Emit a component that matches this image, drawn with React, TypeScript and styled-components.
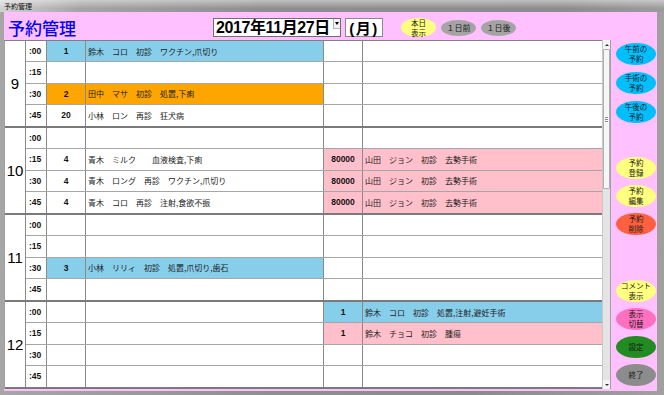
import React from 'react';
import styled, { createGlobalStyle } from 'styled-components';

const GlobalStyle = createGlobalStyle`
  html, body { margin: 0; padding: 0; background: #ffffff; }
  body { font-family: "Noto Sans CJK JP", "Liberation Sans", sans-serif; }
  * { box-sizing: border-box; }
`;

const CJK = `"Noto Sans CJK JP", "Liberation Sans", sans-serif`;
const NUM = `"Liberation Sans", "Noto Sans CJK JP", sans-serif`;

const Window = styled.div`
  width: 664px;
  height: 395px;
  display: flex;
  flex-direction: column;
  overflow: hidden;
  background: linear-gradient(90deg, #a6a6a6, #8f8f8f 40%, #8a8a8a 70%, #a0a0a0);
`;

const TitleBar = styled.div`
  flex: none;
  height: 12px;
  padding-left: 4px;
  font-family: ${CJK};
  font-size: 7px;
  line-height: 12px;
  color: #111;
  background:
    linear-gradient(180deg, rgba(255, 255, 255, 0.45), rgba(255, 255, 255, 0) 70%),
    linear-gradient(90deg, #d2d2d2 0%, #a4a4a4 12%, #8e8e8e 40%, #8c8c8c 85%, #9c9c9c 100%);
`;

const Client = styled.div`
  flex: 1;
  margin: 0 7px 4px 4px;
  background: #ffc0ff;
  display: flex;
  flex-direction: column;
`;

const Header = styled.div`
  flex: none;
  height: 28px;
  padding-top: 3px;
  display: flex;
  align-items: center;
`;

const AppTitle = styled.div`
  width: 209px;
  padding-left: 4px;
  font-family: ${CJK};
  font-size: 17px;
  font-weight: 500;
  line-height: 1;
  color: #0000ff;
`;

const DateBox = styled.div`
  width: 128px;
  height: 19px;
  display: flex;
  align-items: flex-start;
  background: #ffffff;
  border: 1px solid #6e6e6e;
  padding-left: 2px;
`;

const DateText = styled.span`
  font-family: ${NUM};
  font-weight: bold;
  font-size: 16px;
  line-height: 17px;
  letter-spacing: -0.4px;
  color: #000;
`;

const DropArrow = styled.span`
  margin-left: auto;
  width: 7px;
  height: 10px;
  background: #f2f2f2;
  border-left: 1px solid #b8b8b8;
  border-bottom: 1px solid #b8b8b8;
  display: flex;
  align-items: center;
  justify-content: center;
  &::after {
    content: '';
    border-left: 2px solid transparent;
    border-right: 2px solid transparent;
    border-top: 3px solid #000;
  }
`;

const DayBox = styled.div`
  margin-left: 4px;
  width: 38px;
  height: 19px;
  background: #ffffff;
  border: 1px solid #8a8a8a;
  display: flex;
  align-items: center;
  justify-content: center;
  font-family: ${NUM};
  font-weight: bold;
  font-size: 15px;
  letter-spacing: 1.5px;
  color: #000;
`;

const Oval = styled.div<{ $bg: string; $w: number; $h: number; $ml?: number; $fs?: number; $lh?: number }>`
  flex: none;
  width: ${(p) => p.$w}px;
  height: ${(p) => p.$h}px;
  margin-left: ${(p) => p.$ml ?? 0}px;
  border-radius: 50%;
  background: ${(p) => p.$bg};
  color: #1a1a1a;
  display: flex;
  flex-direction: column;
  align-items: center;
  justify-content: center;
  font-family: ${CJK};
  font-size: ${(p) => p.$fs ?? 7.5}px;
  line-height: ${(p) => p.$lh ?? 10}px;
  text-align: center;
`;

const OvalLine = styled.span`
  display: block;
  white-space: nowrap;
`;

const Body = styled.div`
  flex: none;
  height: 349px;
  display: flex;
`;

const Grid = styled.div`
  width: 598px;
  border-left: 1px solid #a0a0a0;
  border-top: 1px solid #808080;
  display: flex;
  flex-direction: column;
  background: #ffffff;
`;

const HourBlock = styled.div`
  height: 87px;
  display: flex;
  border-bottom: 2px solid #7a7a7a;
`;

const HourCell = styled.div`
  width: 21px;
  border-right: 1px solid #8a8a8a;
  display: flex;
  align-items: center;
  justify-content: center;
  font-family: ${NUM};
  font-size: 15px;
  color: #000;
`;

const Slots = styled.div`
  flex: 1;
  display: grid;
  grid-template-rows: repeat(4, 1fr);
`;

const Slot = styled.div`
  display: grid;
  grid-template-columns: 21px 39px 238px 39px 1fr;
  border-bottom: 1px solid #a6a6a6;
  &:last-child {
    border-bottom: none;
  }
`;

const MinuteCell = styled.div`
  border-right: 1px solid #8a8a8a;
  display: flex;
  align-items: center;
  padding-left: 3px;
  font-family: ${NUM};
  font-weight: bold;
  font-size: 8.5px;
  color: #111;
`;

const NumCell = styled.div<{ $bg?: string }>`
  background: ${(p) => p.$bg ?? '#ffffff'};
  border-right: 1px solid #8a8a8a;
  display: flex;
  align-items: center;
  justify-content: center;
  font-family: ${NUM};
  font-weight: bold;
  font-size: 8.5px;
  color: #111;
`;

const TextCell = styled.div<{ $bg?: string; $last?: boolean }>`
  background: ${(p) => p.$bg ?? '#ffffff'};
  border-right: ${(p) => (p.$last ? 'none' : '1px solid #8a8a8a')};
  display: flex;
  align-items: center;
  padding-left: 2px;
  font-family: ${CJK};
  font-size: 8px;
  color: #222;
  white-space: pre;
`;

const ScrollBar = styled.div`
  width: 9px;
  display: flex;
  flex-direction: column;
  background: #e4e4e4;
  border-left: 1px solid #c8c8c8;
  border-right: 1px solid #a0a0a0;
`;

const ScrollButton = styled.div<{ $down?: boolean }>`
  flex: none;
  height: 9px;
  background: #f4f4f4;
  display: flex;
  align-items: center;
  justify-content: center;
  &::after {
    content: '';
    border-left: 2px solid transparent;
    border-right: 2px solid transparent;
    ${(p) => (p.$down ? 'border-top: 2px solid #333;' : 'border-bottom: 2px solid #333;')}
  }
`;

const Thumb = styled.div`
  flex: none;
  height: 140px;
  background: #f6f6f6;
  border: 1px solid #b0b0b0;
  border-radius: 1px;
  display: flex;
  flex-direction: column;
  align-items: center;
  justify-content: center;
  gap: 1px;
`;

const Grip = styled.span`
  width: 3px;
  height: 1px;
  background: #8a8a8a;
`;

const Track = styled.div`
  flex: 1;
`;

const SidePanel = styled.div`
  width: 46px;
  padding-left: 5px;
  display: flex;
  flex-direction: column;
`;

const ButtonGroup = styled.div<{ $mt: number; $gap: number }>`
  margin-top: ${(p) => p.$mt}px;
  display: flex;
  flex-direction: column;
  gap: ${(p) => p.$gap}px;
`;

type Side = { num?: string; text?: string; bg?: string };
type Row = { min: string; left?: Side; right?: Side };

const BLUE = '#87ceeb';
const ORANGE = '#ffa500';
const PINK = '#ffc0cb';

const hours: { h: string; rows: Row[] }[] = [
  {
    h: '9',
    rows: [
      { min: ':00', left: { num: '1', text: '鈴木　コロ　初診　ワクチン,爪切り', bg: BLUE } },
      { min: ':15' },
      { min: ':30', left: { num: '2', text: '田中　マサ　初診　処置,下痢', bg: ORANGE } },
      { min: ':45', left: { num: '20', text: '小林　ロン　再診　狂犬病' } },
    ],
  },
  {
    h: '10',
    rows: [
      { min: ':00' },
      {
        min: ':15',
        left: { num: '4', text: '青木　ミルク　　血液検査,下痢' },
        right: { num: '80000', text: '山田　ジョン　初診　去勢手術', bg: PINK },
      },
      {
        min: ':30',
        left: { num: '4', text: '青木　ロング　再診　ワクチン,爪切り' },
        right: { num: '80000', text: '山田　ジョン　初診　去勢手術', bg: PINK },
      },
      {
        min: ':45',
        left: { num: '4', text: '青木　コロ　再診　注射,食欲不振' },
        right: { num: '80000', text: '山田　ジョン　初診　去勢手術', bg: PINK },
      },
    ],
  },
  {
    h: '11',
    rows: [
      { min: ':00' },
      { min: ':15' },
      { min: ':30', left: { num: '3', text: '小林　リリィ　初診　処置,爪切り,歯石', bg: BLUE } },
      { min: ':45' },
    ],
  },
  {
    h: '12',
    rows: [
      { min: ':00', right: { num: '1', text: '鈴木　コロ　初診　処置,注射,避妊手術', bg: BLUE } },
      { min: ':15', right: { num: '1', text: '鈴木　チョコ　初診　腫瘍', bg: PINK } },
      { min: ':30' },
      { min: ':45' },
    ],
  },
];

type Btn = { lines: string[]; bg: string };

const groups: { mt: number; gap: number; items: Btn[] }[] = [
  {
    mt: 3,
    gap: 7,
    items: [
      { lines: ['午前の', '予約'], bg: '#00bfff' },
      { lines: ['手術の', '予約'], bg: '#00bfff' },
      { lines: ['午後の', '予約'], bg: '#00bfff' },
    ],
  },
  {
    mt: 34,
    gap: 6,
    items: [
      { lines: ['予約', '登録'], bg: '#ffff80' },
      { lines: ['予約', '編集'], bg: '#ffff80' },
      { lines: ['予約', '削除'], bg: '#ff6040' },
    ],
  },
  {
    mt: 45,
    gap: 6,
    items: [
      { lines: ['コメント', '表示'], bg: '#ffff80' },
      { lines: ['表示', '切替'], bg: '#ff70c0' },
      { lines: ['設定'], bg: '#228b22' },
      { lines: ['終了'], bg: '#8c8c8c' },
    ],
  },
];

export default function App() {
  return (
    <>
      <GlobalStyle />
      <Window>
        <TitleBar>予約管理</TitleBar>
        <Client>
          <Header>
            <AppTitle>予約管理</AppTitle>
            <DateBox>
              <DateText>2017年11月27日</DateText>
              <DropArrow />
            </DateBox>
            <DayBox>(月)</DayBox>
            <Oval $bg="#ffff80" $w={35} $h={19} $ml={18} $fs={7.5} $lh={10}>
              <OvalLine>本日</OvalLine>
              <OvalLine>表示</OvalLine>
            </Oval>
            <Oval $bg="#a4a4a4" $w={35} $h={16} $ml={5} $fs={8}>
              <OvalLine>１日前</OvalLine>
            </Oval>
            <Oval $bg="#a4a4a4" $w={35} $h={16} $ml={5} $fs={8}>
              <OvalLine>１日後</OvalLine>
            </Oval>
          </Header>
          <Body>
            <Grid>
              {hours.map((blk) => (
                <HourBlock key={blk.h}>
                  <HourCell>{blk.h}</HourCell>
                  <Slots>
                    {blk.rows.map((r) => (
                      <Slot key={r.min}>
                        <MinuteCell>{r.min}</MinuteCell>
                        <NumCell $bg={r.left?.bg}>{r.left?.num}</NumCell>
                        <TextCell $bg={r.left?.bg}>{r.left?.text}</TextCell>
                        <NumCell $bg={r.right?.bg}>{r.right?.num}</NumCell>
                        <TextCell $bg={r.right?.bg} $last>
                          {r.right?.text}
                        </TextCell>
                      </Slot>
                    ))}
                  </Slots>
                </HourBlock>
              ))}
            </Grid>
            <ScrollBar>
              <ScrollButton />
              <Thumb>
                <Grip />
                <Grip />
                <Grip />
              </Thumb>
              <Track />
              <ScrollButton $down />
            </ScrollBar>
            <SidePanel>
              {groups.map((g, i) => (
                <ButtonGroup key={i} $mt={g.mt} $gap={g.gap}>
                  {g.items.map((b) => (
                    <Oval key={b.lines.join('')} $bg={b.bg} $w={40} $h={22}>
                      {b.lines.map((l) => (
                        <OvalLine key={l}>{l}</OvalLine>
                      ))}
                    </Oval>
                  ))}
                </ButtonGroup>
              ))}
            </SidePanel>
          </Body>
        </Client>
      </Window>
    </>
  );
}
